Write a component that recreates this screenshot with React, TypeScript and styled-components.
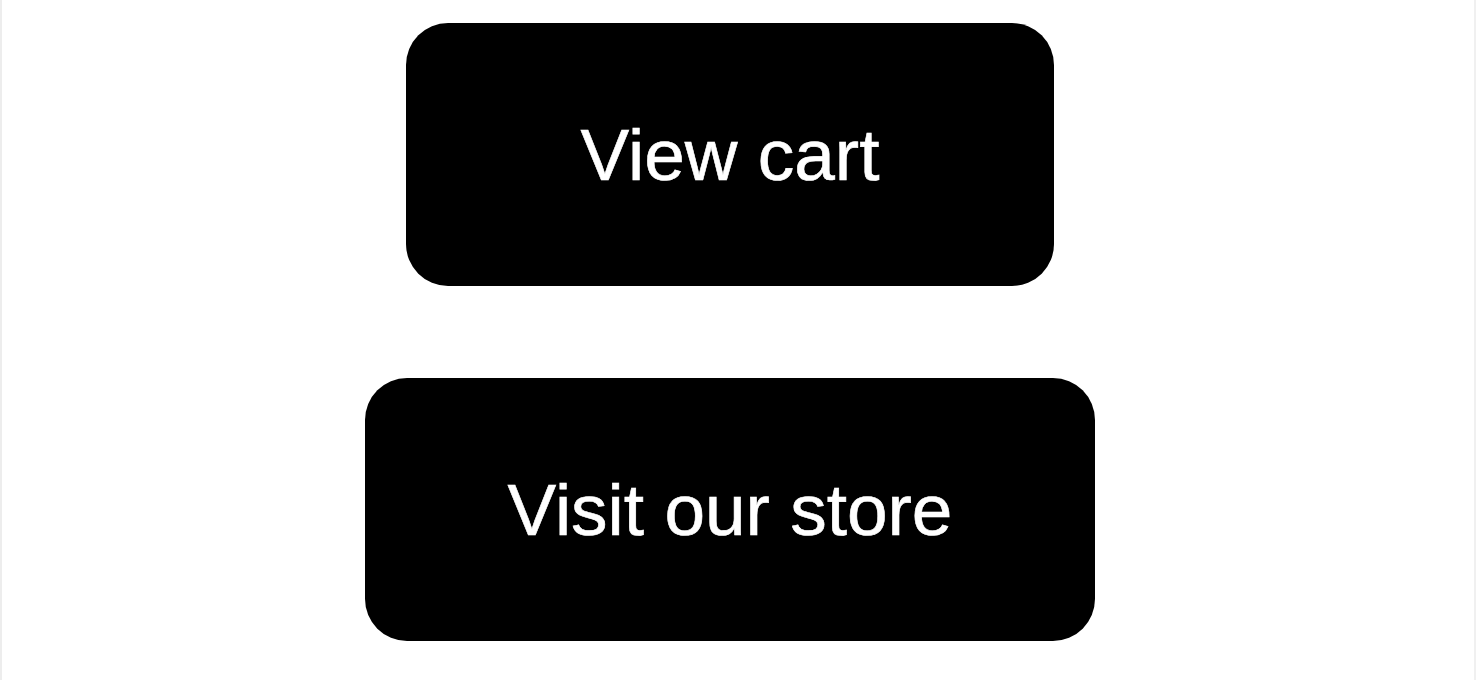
import React from 'react';
import styled, { createGlobalStyle } from 'styled-components';

const GlobalStyle = createGlobalStyle`
  html,
  body {
    margin: 0;
    background: #ffffff;
    font-family: 'Liberation Sans', Arial, sans-serif;
  }
`;

const Frame = styled.div`
  box-sizing: border-box;
  width: 1476px;
  height: 680px;
  border-left: 2px solid #ededed;
  border-right: 2px solid #f0f0f0;
  display: flex;
  flex-direction: column;
  align-items: center;
  gap: 92px;
  padding: 23px 16px 0 0;
`;

const ActionButton = styled.button<{ $width: number }>`
  width: ${props => props.$width}px;
  height: 263px;
  border: none;
  border-radius: 42px;
  background: #000000;
  color: #ffffff;
  font-family: 'Liberation Sans', Arial, sans-serif;
  font-size: 73px;
  line-height: 1;
  -webkit-text-stroke: 0.6px #ffffff;
  padding: 0;
  cursor: pointer;
`;

export default function App() {
  return (
    <>
      <GlobalStyle />
      <Frame>
        <ActionButton $width={648}>View cart</ActionButton>
        <ActionButton $width={730}>Visit our store</ActionButton>
      </Frame>
    </>
  );
}
